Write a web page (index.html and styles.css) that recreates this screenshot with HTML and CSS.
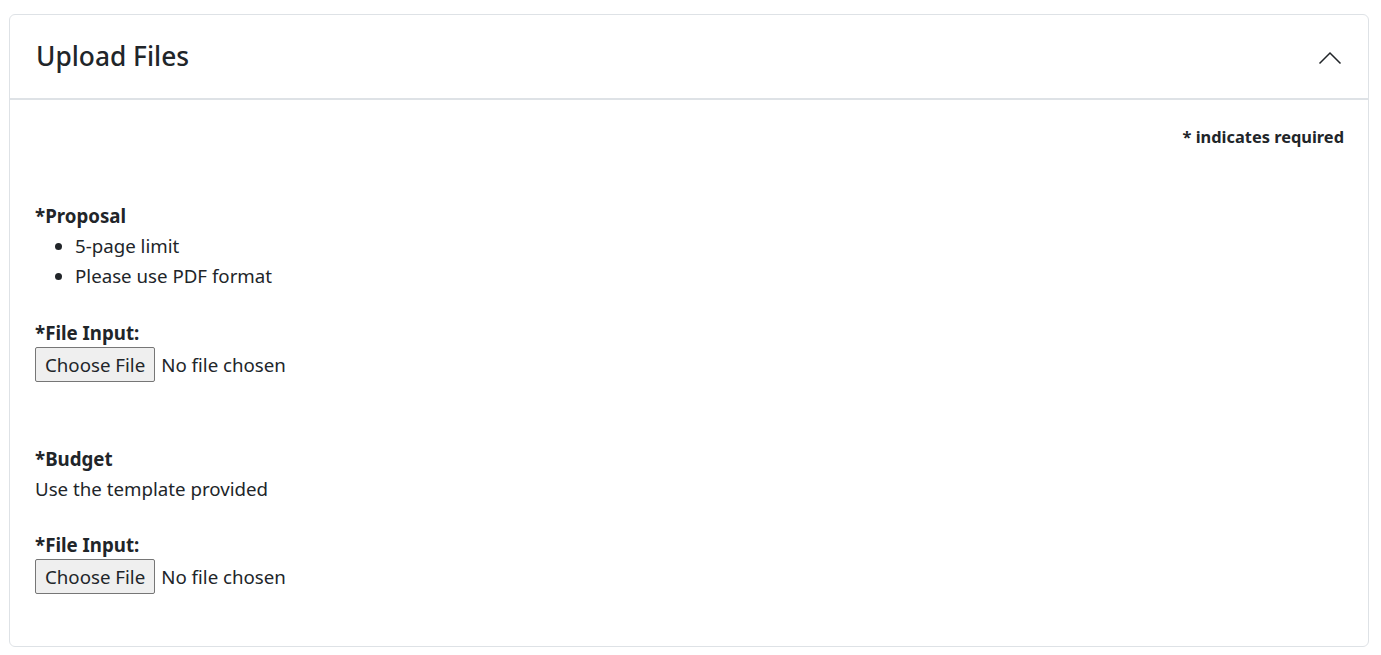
FILE: index.html
```html
<!DOCTYPE html>
<html lang="en">
<head>
<meta charset="utf-8">
<title>Upload Files</title>
<link rel="stylesheet" href="styles.css">
</head>
<body>
<section class="card">
  <header class="card-header">
    <h3 class="card-title">Upload Files</h3>
    <button class="collapse-btn" type="button" aria-label="Collapse">
      <svg width="24" height="14" viewBox="0 0 24 14" aria-hidden="true"><path d="M1.5 12.5 L12 2 L22.5 12.5" fill="none" stroke="#212529" stroke-width="1.5"/></svg>
    </button>
  </header>
  <div class="card-body">
    <p class="required-note">* indicates required</p>
    <div class="upload-group first">
      <div class="group-title">*Proposal</div>
      <ul class="hint-list">
        <li>5-page limit</li>
        <li>Please use PDF format</li>
      </ul>
      <label class="field-label" for="proposal">*File Input:</label>
      <input class="file-input" id="proposal" type="file">
    </div>
    <div class="upload-group">
      <div class="group-title">*Budget</div>
      <div class="hint">Use the template provided</div>
      <label class="field-label" for="budget">*File Input:</label>
      <input class="file-input" id="budget" type="file">
    </div>
  </div>
</section>
</body>
</html>
```
FILE: styles.css
```css
html, body {
  margin: 0;
  padding: 0;
  background: #fff;
}
body {
  padding: 14px 12px 0 9px;
  font-family: "Noto Sans", "Open Sans", sans-serif;
  color: #212529;
  font-size: 18.7px;
  line-height: 30px;
}
.card {
  border: 1px solid #dee2e6;
  border-radius: 6px;
  height: 633px;
  box-sizing: border-box;
}
.card-header {
  display: flex;
  align-items: center;
  justify-content: space-between;
  height: 85px;
  box-sizing: border-box;
  padding: 0 26px 0 26px;
  border-bottom: 2px solid #dee2e6;
}
.card-title {
  margin: 0;
  font-size: 26.3px;
  font-weight: 500;
  line-height: 1.2;
}
.collapse-btn {
  background: none;
  border: 0;
  padding: 0;
  display: flex;
  margin-top: 2px;
}
.card-body {
  padding: 22px 24px 0 25px;
}
.required-note {
  margin: 0;
  text-align: right;
  font-weight: 700;
  font-size: 16.4px;
}
.upload-group {
  margin-top: 62px;
}
.upload-group.first {
  margin-top: 49px;
}
.group-title {
  font-weight: 700;
}
.hint-list {
  margin: 0 0 27px;
  padding-left: 40px;
}
.hint {
  margin-bottom: 26px;
}
.field-label {
  display: block;
  font-weight: 700;
  line-height: 29px;
}
.file-input {
  display: block;
  font-family: inherit;
  font-size: 18.7px;
  color: #212529;
  height: 35px;
  margin: 0;
}
.file-input::file-selector-button {
  font-family: inherit;
  font-size: 18.7px;
  color: #212529;
  height: 35px;
  padding: 0 9px;
  margin-right: 6px;
  background: #efefef;
  border: 1px solid #767676;
  border-radius: 2px;
}
```
